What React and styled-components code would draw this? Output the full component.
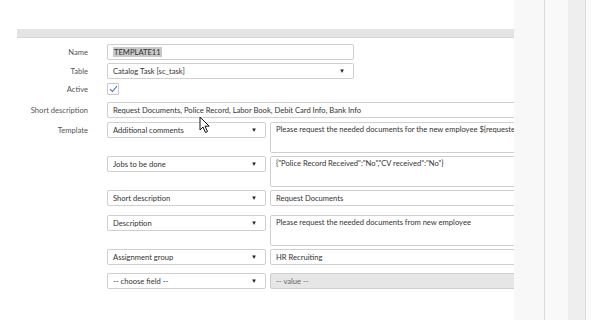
import React from "react";
import styled, { createGlobalStyle } from "styled-components";

const GlobalStyle = createGlobalStyle`
  html, body {
    margin: 0;
    padding: 0;
    background: #ffffff;
  }
  body {
    font-family: "Lato", "Open Sans", sans-serif;
  }
`;

const Page = styled.div`
  display: flex;
  width: 591px;
  height: 320px;
  overflow: hidden;
  position: relative;
`;

const Main = styled.main`
  width: 514px;
  flex: none;
  overflow: hidden;
  padding-top: 29px;
  box-sizing: border-box;
`;

const Band = styled.div`
  margin-left: 17px;
  height: 8px;
  background: #e4e4e4;
  border-bottom: 1px solid #d8d8d8;
`;

const Form = styled.div`
  display: flex;
  flex-direction: column;
  padding-top: 6px;
`;

const Row = styled.div`
  display: grid;
  grid-template-columns: 88px 1fr;
  column-gap: 19px;
  align-items: start;
  height: ${(p) => p.$h || "auto"};
  margin-bottom: ${(p) => p.$gap ?? 3}px;
`;

const Label = styled.label`
  text-align: right;
  font-size: 7.6px;
  color: #555;
  line-height: ${(p) => p.$lh || 16}px;
  white-space: nowrap;
`;

const Input = styled.div`
  box-sizing: border-box;
  height: 16px;
  width: ${(p) => p.$width || "auto"};
  border: 1px solid #cfcfcf;
  border-radius: 2px;
  background: ${(p) => (p.$disabled ? "#e6e6e6" : "#fff")};
  font-size: 7.6px;
  color: ${(p) => (p.$disabled ? "#666" : "#333")};
  line-height: 14px;
  padding: 0 5px;
  white-space: nowrap;
  overflow: hidden;
  display: flex;
  align-items: center;
  justify-content: space-between;
`;

const TextArea = styled.div`
  box-sizing: border-box;
  height: 31px;
  border: 1px solid #cfcfcf;
  border-radius: 2px;
  background: #fff;
  font-size: 7.6px;
  color: #333;
  line-height: 13px;
  padding: 0 5px;
  white-space: nowrap;
  overflow: hidden;
`;

const Arrow = styled.span`
  font-size: 6px;
  color: #222;
  margin-right: 3px;
`;

const Selected = styled.span`
  background: #c9c9c9;
  color: #333;
  padding: 0 1px;
`;

const Check = styled.div`
  box-sizing: border-box;
  width: 12px;
  height: 12px;
  border: 1px solid #c9c9c9;
  border-radius: 1px;
  background: #fff;
  display: flex;
  align-items: center;
  justify-content: center;
`;

const Templates = styled.div`
  display: flex;
  flex-direction: column;
`;

const TemplateRow = styled.div`
  display: grid;
  grid-template-columns: 159px 260px;
  column-gap: 4px;
  margin-bottom: ${(p) => (p.$multi ? 3 : 8.5)}px;
`;

const SideStrip = styled.div`
  flex: none;
  width: ${(p) => p.$w}px;
  background: ${(p) => p.$bg};
  border-right: ${(p) => (p.$line ? "1px solid #dcdcdc" : "none")};
`;

const Cursor = styled.svg`
  position: absolute;
  left: 199px;
  top: 116px;
`;

const Select = ({ children, width }) => (
  <Input $width={width}>
    <span>{children}</span>
    <Arrow>▼</Arrow>
  </Input>
);

const templates = [
  { field: "Additional comments", value: "Please request the needed documents for the new employee ${requested_for}", multi: true },
  { field: "Jobs to be done", value: '{"Police Record Received":"No","CV received":"No"}', multi: true },
  { field: "Short description", value: "Request Documents" },
  { field: "Description", value: "Please request the needed documents from new employee", multi: true },
  { field: "Assignment group", value: "HR Recruiting" },
  { field: "-- choose field --", value: "-- value --", disabled: true },
];

export default function App() {
  return (
    <Page>
      <GlobalStyle />
      <Main>
        <Band />
        <Form>
          <Row $h="16px">
            <Label>Name</Label>
            <Input $width="247px">
              <span>
                <Selected>TEMPLATE11</Selected>
              </span>
            </Input>
          </Row>
          <Row $h="16px" $gap={4}>
            <Label>Table</Label>
            <Select width="247px">Catalog Task [sc_task]</Select>
          </Row>
          <Row $h="12px" $gap={7}>
            <Label $lh={12}>Active</Label>
            <Check>
              <svg width="9" height="8" viewBox="0 0 9 8">
                <path d="M1 4.2 L3.4 6.5 L8 1.2" fill="none" stroke="#3a78c3" strokeWidth="1.1" />
              </svg>
            </Check>
          </Row>
          <Row $h="16px" $gap={4}>
            <Label>Short description</Label>
            <Input $width="420px">
              <span>Request Documents, Police Record, Labor Book, Debit Card Info, Bank Info</span>
            </Input>
          </Row>
          <Row>
            <Label>Template</Label>
            <Templates>
              {templates.map((t) => (
                <TemplateRow key={t.field} $multi={t.multi}>
                  <Select>{t.field}</Select>
                  {t.multi ? (
                    <TextArea>{t.value}</TextArea>
                  ) : (
                    <Input $disabled={t.disabled}>
                      <span>{t.value}</span>
                    </Input>
                  )}
                </TemplateRow>
              ))}
            </Templates>
          </Row>
        </Form>
      </Main>
      <SideStrip $w={30} $bg="#f8f8f8" $line />
      <SideStrip $w={23} $bg="#f9f9f9" />
      <SideStrip $w={17} $bg="#eeeeee" $line />
      <SideStrip $w={6} $bg="#fafafa" />
      <Cursor width="12" height="18" viewBox="0 0 12 18">
        <path
          d="M1 1 L1 14 L4 11 L6.5 16.5 L8.5 15.6 L6 10.2 L10.2 10.2 Z"
          fill="#fff"
          stroke="#111"
          strokeWidth="1"
          strokeLinejoin="round"
        />
      </Cursor>
    </Page>
  );
}
